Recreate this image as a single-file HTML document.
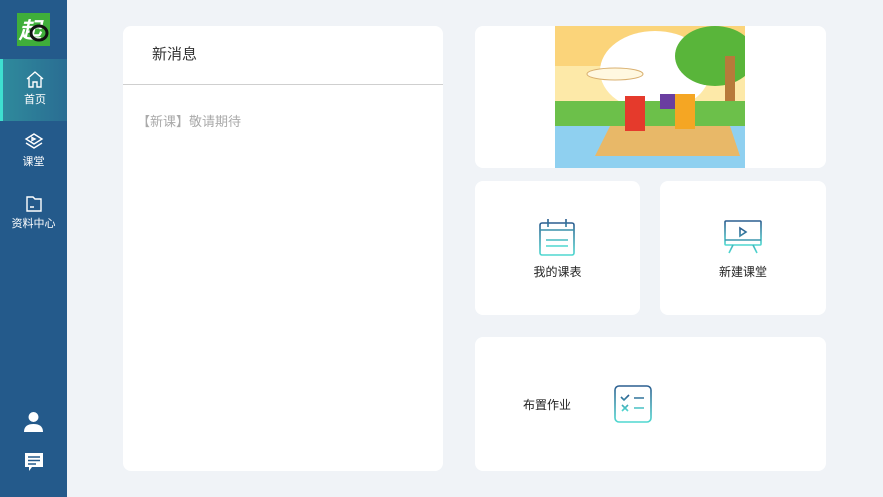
<!DOCTYPE html>
<html><head><meta charset="utf-8"><style>
*{margin:0;padding:0;box-sizing:border-box}
body{width:883px;height:497px;background:#f0f3f7;font-family:"Liberation Sans","Noto Sans CJK SC",sans-serif;position:relative;overflow:hidden}
.sb{position:absolute;left:0;top:0;width:67px;height:497px;background:#245a8b}
.logo{position:absolute;left:17px;top:13px;width:33px;height:33px;background:#3fae3a}
.nav{position:absolute;left:0;width:67px;height:62px;color:#fff;font-size:11px;text-align:center}
.nav svg{display:block;margin:0 auto}
.act{background:linear-gradient(90deg,#2f8a9c,#2a6d93);border-left:3px solid #3ee0d0}
.card{position:absolute;background:#fff;border-radius:8px}
.lbl{position:absolute;font-size:12px;color:#222;width:100%;text-align:center}
</style></head><body>
<div class="sb">
 <div class="logo"><svg width="33" height="33"><text x="2" y="25" font-size="22" fill="#fff" font-style="italic" font-weight="bold" font-family="Liberation Sans,sans-serif">起</text><ellipse cx="22" cy="20" rx="8" ry="7" fill="none" stroke="#111" stroke-width="3"/></svg></div>
 <div class="nav act" style="top:59px"><svg width="20" height="20" style="margin-top:11px" viewBox="0 0 20 20" fill="none" stroke="#fff" stroke-width="1.4"><path d="M2 9L10 2l8 7M4 8v9h4v-5h4v5h4V8"/></svg><div style="margin-top:1px">首页</div></div>
 <div class="nav" style="top:121px"><svg width="20" height="20" style="margin-top:11px" viewBox="0 0 20 20" fill="none" stroke="#fff" stroke-width="1.4"><path d="M10 2l8 5-8 5-8-5z M2 11l8 5 8-5 M8 5.5l3 1.5-3 1.5z"/></svg><div style="margin-top:1px">课堂</div></div>
 <div class="nav" style="top:183px"><svg width="20" height="20" style="margin-top:11px" viewBox="0 0 20 20" fill="none" stroke="#fff" stroke-width="1.4"><path d="M3 3h6l2 2h6v12H3z M6 13h4"/></svg><div style="margin-top:1px">资料中心</div></div>
 <svg style="position:absolute;left:23px;top:411px" width="21" height="21" viewBox="0 0 21 21" fill="#fff"><circle cx="10.5" cy="6" r="5"/><path d="M1 21c0-6 4-8 9.5-8s9.5 2 9.5 8z"/></svg>
 <svg style="position:absolute;left:24px;top:452px" width="20" height="20" viewBox="0 0 20 20"><path d="M1 1h18v14H8l-3 4v-4H1z" fill="#fff"/><path d="M4 5h12M4 8.5h12M4 12h8" stroke="#245a8b" stroke-width="1.5"/></svg>
</div>

<div class="card" style="left:123px;top:26px;width:320px;height:445px">
 <div style="position:absolute;left:29px;top:17px;font-size:15px;color:#333">新消息</div>
 <div style="position:absolute;left:0;top:58px;width:320px;height:1px;background:#cfcfcf"></div>
 <div style="position:absolute;left:14px;top:85px;font-size:13px;color:#aaa">【新课】敬请期待</div>
</div>

<div class="card" style="left:475px;top:26px;width:351px;height:142px">
 <svg style="position:absolute;left:80px;top:0" width="190" height="142" viewBox="0 0 190 142">
  <rect width="190" height="142" fill="#fde9a8"/>
  <rect width="190" height="40" fill="#fbd47a"/>
  <ellipse cx="100" cy="45" rx="55" ry="40" fill="#fff"/>
  <ellipse cx="160" cy="30" rx="40" ry="30" fill="#59b53a"/>
  <rect x="170" y="30" width="10" height="50" fill="#b77a3a"/>
  <rect y="75" width="190" height="30" fill="#6cc04a"/>
  <rect y="100" width="190" height="42" fill="#8fd0f0"/>
  <path d="M55 100h120l10 30H40z" fill="#e8b868"/>
  <ellipse cx="60" cy="48" rx="28" ry="6" fill="#fff8e0" stroke="#d9b070"/>
  <rect x="70" y="70" width="20" height="35" fill="#e53a2c"/>
  <rect x="120" y="68" width="20" height="35" fill="#f5a623"/>
  <rect x="105" y="68" width="15" height="15" fill="#6a3ea0"/>
 </svg>
</div>

<div class="card" style="left:475px;top:181px;width:165px;height:134px">
 <svg style="position:absolute;left:64px;top:37px" width="36" height="38" viewBox="0 0 36 38" fill="none" stroke-width="1.6"><defs><linearGradient id="g" x1="0" y1="0" x2="0" y2="1"><stop offset="0" stop-color="#2a5d8f"/><stop offset="1" stop-color="#4fd8d0"/></linearGradient></defs><g stroke="url(#g)"><rect x="1" y="5" width="34" height="32" rx="2"/><path d="M1 12h34M9 1v8M27 1v8M7 22h22M7 28h22"/></g></svg>
 <div class="lbl" style="top:82px">我的课表</div>
</div>

<div class="card" style="left:660px;top:181px;width:166px;height:134px">
 <svg style="position:absolute;left:64px;top:39px" width="38" height="35" viewBox="0 0 38 35" fill="none" stroke-width="1.6"><defs><linearGradient id="g2" x1="0" y1="0" x2="0" y2="1"><stop offset="0" stop-color="#2a5d8f"/><stop offset="1" stop-color="#4fd8d0"/></linearGradient></defs><g stroke="url(#g2)"><rect x="1" y="1" width="36" height="24" rx="1"/><path d="M1 20h36M16 8l6 4-6 4z M9 25l-4 8M29 25l4 8"/></g></svg>
 <div class="lbl" style="top:82px">新建课堂</div>
</div>

<div class="card" style="left:475px;top:337px;width:351px;height:134px">
 <div style="position:absolute;left:48px;top:59px;font-size:12px;color:#222">布置作业</div>
 <svg style="position:absolute;left:139px;top:48px" width="38" height="38" viewBox="0 0 38 38" fill="none" stroke-width="1.6"><defs><linearGradient id="g3" x1="0" y1="0" x2="0" y2="1"><stop offset="0" stop-color="#2a5d8f"/><stop offset="1" stop-color="#4fd8d0"/></linearGradient></defs><g stroke="url(#g3)"><rect x="1" y="1" width="36" height="36" rx="4"/><path d="M7 12l3 3 5-5M20 13h10M8 20l6 6M14 20l-6 6M20 23h10"/></g></svg>
</div>
</body></html>
